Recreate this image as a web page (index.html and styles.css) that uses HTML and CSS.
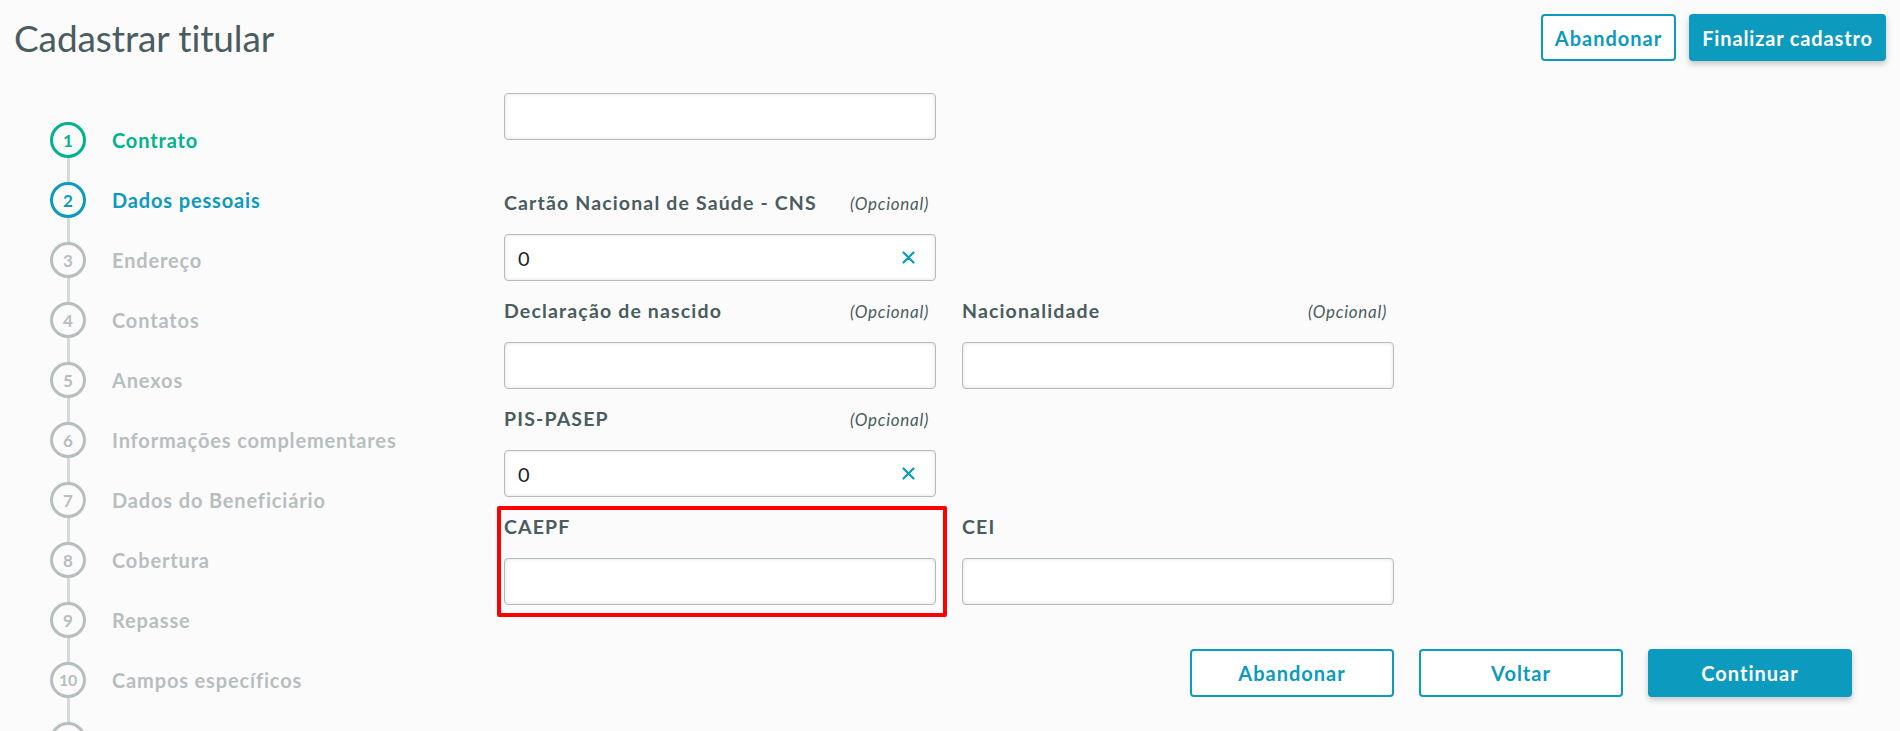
FILE: index.html
```html
<!DOCTYPE html>
<html lang="pt-BR">
<head>
<meta charset="utf-8">
<title>Cadastrar titular</title>
<link rel="stylesheet" href="styles.css">
</head>
<body>
<div class="page">
  <header class="page-header">
    <h1 class="page-title">Cadastrar titular</h1>
    <div class="header-actions">
      <button class="btn btn-outline btn-sm btn-abandon">Abandonar</button>
      <button class="btn btn-primary btn-sm btn-finish">Finalizar cadastro</button>
    </div>
  </header>

  <div class="page-body">
    <nav class="stepper">
      <div class="step step-done"><div class="step-marker"><span class="step-circle">1</span><span class="step-line"></span></div><span class="step-label">Contrato</span></div>
      <div class="step step-active"><div class="step-marker"><span class="step-circle">2</span><span class="step-line"></span></div><span class="step-label">Dados pessoais</span></div>
      <div class="step"><div class="step-marker"><span class="step-circle">3</span><span class="step-line"></span></div><span class="step-label">Endereço</span></div>
      <div class="step"><div class="step-marker"><span class="step-circle">4</span><span class="step-line"></span></div><span class="step-label">Contatos</span></div>
      <div class="step"><div class="step-marker"><span class="step-circle">5</span><span class="step-line"></span></div><span class="step-label">Anexos</span></div>
      <div class="step"><div class="step-marker"><span class="step-circle">6</span><span class="step-line"></span></div><span class="step-label">Informações complementares</span></div>
      <div class="step"><div class="step-marker"><span class="step-circle">7</span><span class="step-line"></span></div><span class="step-label">Dados do Beneficiário</span></div>
      <div class="step"><div class="step-marker"><span class="step-circle">8</span><span class="step-line"></span></div><span class="step-label">Cobertura</span></div>
      <div class="step"><div class="step-marker"><span class="step-circle">9</span><span class="step-line"></span></div><span class="step-label">Repasse</span></div>
      <div class="step"><div class="step-marker"><span class="step-circle step-circle-wide">10</span><span class="step-line"></span></div><span class="step-label">Campos específicos</span></div>
      <div class="step"><div class="step-marker"><span class="step-circle"></span></div></div>
    </nav>

    <main class="form-area">
      <div class="form-row form-row-first">
        <div class="field">
          <div class="input-box"><input class="input-control" type="text" value=""></div>
        </div>
      </div>

      <div class="form-row">
        <div class="field">
          <div class="field-label"><span class="label-text">Cartão Nacional de Saúde - CNS</span><span class="label-optional">(Opcional)</span></div>
          <div class="input-box"><input class="input-control" type="text" value="0"><span class="clear-icon"><svg width="13" height="13" viewBox="0 0 13 13"><path d="M1.5 1.5 L11.5 11.5 M11.5 1.5 L1.5 11.5" stroke="currentColor" stroke-width="2.2" stroke-linecap="round" fill="none"/></svg></span></div>
        </div>
      </div>

      <div class="form-row">
        <div class="field">
          <div class="field-label"><span class="label-text">Declaração de nascido</span><span class="label-optional">(Opcional)</span></div>
          <div class="input-box"><input class="input-control" type="text" value=""></div>
        </div>
        <div class="field">
          <div class="field-label"><span class="label-text">Nacionalidade</span><span class="label-optional">(Opcional)</span></div>
          <div class="input-box"><input class="input-control" type="text" value=""></div>
        </div>
      </div>

      <div class="form-row">
        <div class="field">
          <div class="field-label"><span class="label-text">PIS-PASEP</span><span class="label-optional">(Opcional)</span></div>
          <div class="input-box"><input class="input-control" type="text" value="0"><span class="clear-icon"><svg width="13" height="13" viewBox="0 0 13 13"><path d="M1.5 1.5 L11.5 11.5 M11.5 1.5 L1.5 11.5" stroke="currentColor" stroke-width="2.2" stroke-linecap="round" fill="none"/></svg></span></div>
        </div>
      </div>

      <div class="form-row">
        <div class="field field-highlight">
          <div class="field-label"><span class="label-text">CAEPF</span></div>
          <div class="input-box"><input class="input-control" type="text" value=""></div>
        </div>
        <div class="field">
          <div class="field-label"><span class="label-text">CEI</span></div>
          <div class="input-box"><input class="input-control" type="text" value=""></div>
        </div>
      </div>

      <div class="form-actions">
        <button class="btn btn-outline btn-lg">Abandonar</button>
        <button class="btn btn-outline btn-lg">Voltar</button>
        <button class="btn btn-primary btn-lg">Continuar</button>
      </div>
    </main>
  </div>
</div>
</body>
</html>
```

FILE: styles.css
```css
html, body {
  margin: 0;
  padding: 0;
  height: 100%;
  overflow: hidden;
}

body {
  background: #fbfbfb;
  font-family: Lato, "Noto Sans", sans-serif;
  color: #4a5c60;
}

.page {
  display: flex;
  flex-direction: column;
}

/* Header */
.page-header {
  display: flex;
  align-items: center;
  justify-content: space-between;
  padding: 14px 14px 0 14px;
}

.page-title {
  margin: 0;
  font-size: 37px;
  font-weight: 400;
  line-height: 47px;
  color: #4a5c60;
  letter-spacing: -0.1px;
}

.header-actions {
  display: flex;
  gap: 13px;
}

/* Buttons */
.btn {
  font-family: Lato, "Noto Sans", sans-serif;
  font-weight: 700;
  border-radius: 4px;
  box-sizing: border-box;
  cursor: pointer;
  display: inline-flex;
  align-items: center;
  justify-content: center;
  white-space: nowrap;
  padding: 0;
}

.btn-sm {
  height: 47px;
  font-size: 20px;
  letter-spacing: 1px;
}

.btn-abandon { width: 135px; }
.btn-finish { width: 197px; letter-spacing: 0.85px; }

.btn-lg {
  height: 48px;
  width: 204px;
  font-size: 20px;
  letter-spacing: 1px;
}

.btn-outline {
  background: #ffffff;
  color: #0c9abe;
  border: 2px solid #0c9abe;
}

.btn-primary {
  background: #0c9abe;
  color: #ffffff;
  border: 2px solid #0c9abe;
  box-shadow: 0 3px 6px rgba(0, 0, 0, 0.22);
}

/* Body */
.page-body {
  display: flex;
  padding-left: 50px;
}

/* Stepper */
.stepper {
  width: 454px;
  flex: none;
  padding-top: 61px;
  display: flex;
  flex-direction: column;
}

.step {
  display: flex;
  height: 60px;
  color: #b6bec0;
}

.step-marker {
  width: 36px;
  display: flex;
  flex-direction: column;
  align-items: center;
}

.step-circle {
  width: 36px;
  height: 36px;
  flex: none;
  box-sizing: border-box;
  border: 3px solid currentColor;
  border-radius: 50%;
  display: flex;
  align-items: center;
  justify-content: center;
  font-size: 17px;
  font-weight: 700;
  line-height: 1;
}

.step-circle-wide {
  font-size: 16px;
  letter-spacing: -0.3px;
}

.step-line {
  width: 3px;
  flex: 1;
  background: #d4d9da;
}

.step-label {
  margin-left: 26px;
  height: 36px;
  line-height: 36px;
  font-size: 20px;
  font-weight: 700;
  letter-spacing: 0.85px;
  white-space: nowrap;
}

.step-done { color: #00b28e; }
.step-active { color: #0c9abe; }

/* Form */
.form-area {
  flex: 1;
  padding-top: 32px;
  padding-right: 48px;
  display: flex;
  flex-direction: column;
}

.form-row {
  display: grid;
  grid-template-columns: 432px 432px;
  column-gap: 26px;
  margin-bottom: 18px;
}

.form-row-first {
  margin-bottom: 51px;
}

.field {
  position: relative;
  display: flex;
  flex-direction: column;
}

.field-label {
  display: flex;
  justify-content: space-between;
  align-items: baseline;
  height: 24px;
  line-height: 24px;
  margin-bottom: 19px;
  padding-right: 7px;
}

.label-text {
  font-size: 19.5px;
  font-weight: 700;
  letter-spacing: 1.15px;
  color: #4a5c60;
  white-space: nowrap;
}

.label-optional {
  font-size: 17px;
  font-style: italic;
  letter-spacing: 0.7px;
  color: #4a5c60;
}

.input-box {
  height: 47px;
  box-sizing: border-box;
  border: 1px solid #b3bbbd;
  border-radius: 4px;
  background: #ffffff;
  box-shadow: inset 0 0 4px rgba(0, 0, 0, 0.12);
  display: flex;
  align-items: center;
  padding: 0 20px 0 13px;
}

.input-control {
  flex: 1;
  min-width: 0;
  border: none;
  outline: none;
  background: transparent;
  padding: 0;
  font-family: Lato, "Noto Sans", sans-serif;
  font-size: 20px;
  color: #1d2426;
}

.clear-icon {
  display: flex;
  color: #0c9abe;
}

.field-highlight::after {
  content: "";
  position: absolute;
  left: -7px;
  right: -11px;
  top: -9px;
  bottom: -12px;
  border: 4px solid #ff0000;
  border-radius: 2px;
  pointer-events: none;
}

.form-actions {
  display: flex;
  justify-content: flex-end;
  gap: 25px;
  margin-top: 26px;
}
```
